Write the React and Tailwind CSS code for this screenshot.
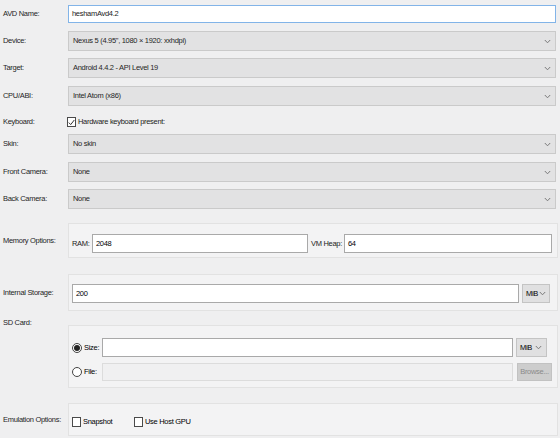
import React from 'react';

function Chevron() {
  return (
    <svg width="7" height="5" viewBox="0 0 7 5" className="shrink-0">
      <polyline points="0.8,1 3.5,3.8 6.2,1" fill="none" stroke="#7a7a7a" strokeWidth="1" />
    </svg>
  );
}

function Select({ value }) {
  return (
    <div className="flex h-[20px] items-center justify-between border border-[#cacaca] bg-[#e2e2e3] pl-[4px] pr-[4px] text-[#262626]">
      <span>{value}</span>
      <Chevron />
    </div>
  );
}

function Check({ checked }) {
  return (
    <div className="flex h-[10px] w-[9px] shrink-0 items-center justify-center border border-[#4a4a4a] bg-white">
      {checked && (
        <svg width="7" height="7" viewBox="0 0 7 7">
          <polyline points="0.8,3.6 2.7,5.6 6.3,1" fill="none" stroke="#333" strokeWidth="1" />
        </svg>
      )}
    </div>
  );
}

function Radio({ checked }) {
  return (
    <div className="flex h-[10px] w-[10px] shrink-0 items-center justify-center rounded-full border border-[#444] bg-white">
      {checked && <div className="h-[6px] w-[6px] rounded-full bg-[#222]" />}
    </div>
  );
}

function Row({ label, className, children }) {
  return (
    <div className={`flex items-center ${className}`}>
      <div className="w-[68px] shrink-0 whitespace-nowrap pl-[3px] text-[#1e1e1e]">{label}</div>
      <div className="min-w-0 flex-1">{children}</div>
    </div>
  );
}

function Group({ className, children }) {
  return (
    <div className={`border border-[#e2e2e2] bg-[#f3f3f4] ${className}`}>{children}</div>
  );
}

export default function App() {
  return (
    <div className="flex h-[438px] w-[560px] flex-col overflow-hidden whitespace-nowrap bg-[#efeff0] pr-[2px] pt-[5px] font-['Liberation_Sans',sans-serif] text-[7.5px] leading-none tracking-[-0.3px]">
      <Row label="AVD Name:">
        <div className="mr-[2px] flex h-[18px] items-center border border-[#82b4e8] bg-white pl-[3px] text-[#222]">
          heshamAvd4.2
        </div>
      </Row>
      <Row label="Device:" className="mt-[8px]">
        <div className="mr-[2px]"><Select value={'Nexus 5 (4.95", 1080 × 1920: xxhdpi)'} /></div>
      </Row>
      <Row label="Target:" className="mt-[7px]">
        <div className="mr-[2px]"><Select value="Android 4.4.2 - API Level 19" /></div>
      </Row>
      <Row label="CPU/ABI:" className="mt-[8px]">
        <div className="mr-[2px]"><Select value="Intel Atom (x86)" /></div>
      </Row>
      <Row label="Keyboard:" className="mt-[7px] h-[18px]">
        <div className="-ml-[1px] flex items-center gap-[2px] text-[#222]">
          <Check checked />
          <span>Hardware keyboard present:</span>
        </div>
      </Row>
      <Row label="Skin:" className="mt-[3px]">
        <div className="mr-[2px]"><Select value="No skin" /></div>
      </Row>
      <Row label="Front Camera:" className="mt-[8px]">
        <div className="mr-[2px]"><Select value="None" /></div>
      </Row>
      <Row label="Back Camera:" className="mt-[7px]">
        <div className="mr-[2px]"><Select value="None" /></div>
      </Row>

      <Row label="Memory Options:" className="mt-[14px]">
        <Group className="flex h-[35px] items-start pl-[3px] pr-[5px] pt-[10px]">
          <div className="flex flex-1 items-center">
            <span className="w-[20px] text-[#222]">RAM:</span>
            <div className="flex h-[19px] w-[216px] items-center border border-[#a9a9a9] bg-white pl-[3px]">2048</div>
            <span className="w-[36px] pl-[3px] text-[#222]">VM Heap:</span>
            <div className="flex h-[19px] flex-1 items-center border border-[#a9a9a9] bg-white pl-[3px]">64</div>
          </div>
        </Group>
      </Row>

      <Row label="Internal Storage:" className="mt-[16px]">
        <Group className="flex h-[37px] items-start gap-[3px] pl-[3px] pr-[7px] pt-[9px]">
          <div className="flex h-[19px] flex-1 items-center border border-[#a9a9a9] bg-white pl-[3px]">200</div>
          <div className="flex h-[19px] w-[28px] items-center justify-between border border-[#c4c4c4] bg-[#e0e0e1] pl-[3px] pr-[3px]">
            <span>MiB</span>
            <Chevron />
          </div>
        </Group>
      </Row>

      <div className="mt-[14px] flex">
        <div className="-mt-[6px] w-[68px] shrink-0 pl-[3px] text-[#1e1e1e]">SD Card:</div>
        <Group className="flex h-[63px] flex-1 flex-col pl-[3px] pr-[5px] pt-[12px]">
          <div className="flex items-center">
            <div className="flex w-[30px] items-center gap-[2px]">
              <Radio checked />
              <span>Size:</span>
            </div>
            <div className="h-[19px] flex-1 border border-[#a9a9a9] bg-white" />
            <div className="ml-[3px] mr-[5px] flex h-[19px] w-[31px] items-center justify-between border border-[#c4c4c4] bg-[#e0e0e1] pl-[3px] pr-[4px]">
              <span>MiB</span>
              <Chevron />
            </div>
          </div>
          <div className="mt-[6px] flex items-center">
            <div className="flex w-[30px] items-center gap-[2px]">
              <Radio />
              <span>File:</span>
            </div>
            <div className="h-[18px] flex-1 border border-[#dcdcdc] bg-[#f0f0f1]" />
            <div className="ml-[4px] flex h-[18px] w-[35px] items-center justify-center border border-[#c2c2c2] bg-[#cdcdcd] text-[#8a8a8a]">
              Browse...
            </div>
          </div>
        </Group>
      </div>

      <Row label="Emulation Options:" className="mt-[15px]">
        <Group className="flex h-[33px] items-center gap-[2px] pl-[3px] pt-[5px]">
          <Check />
          <span className="w-[49px]">Snapshot</span>
          <Check />
          <span>Use Host GPU</span>
        </Group>
      </Row>
    </div>
  );
}
